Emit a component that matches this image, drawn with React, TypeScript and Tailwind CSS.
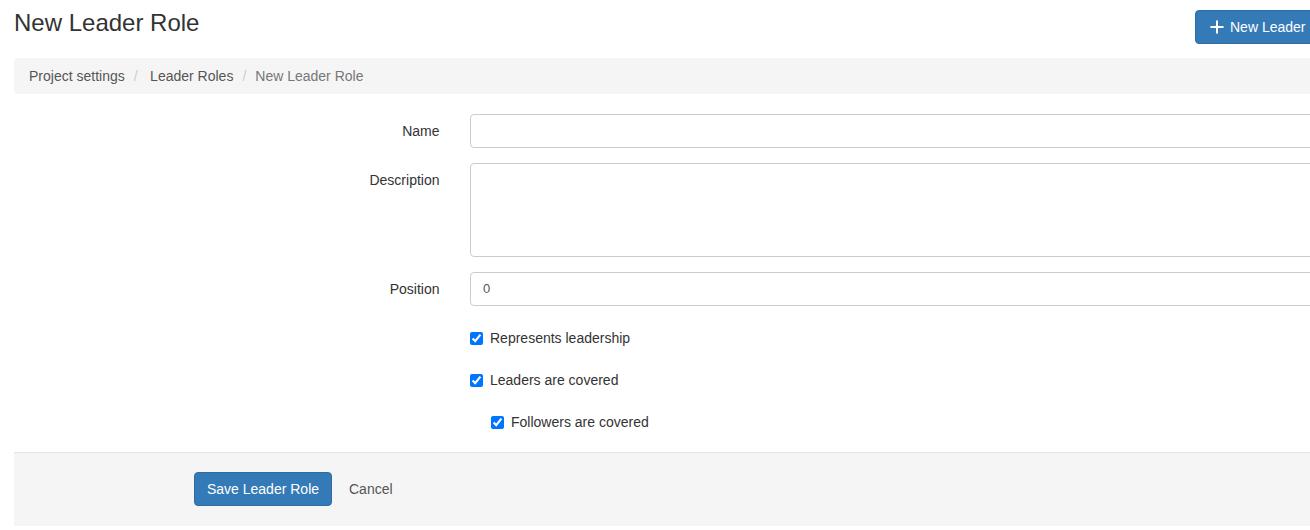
import React from "react";
import { Plus } from "lucide-react";

function Row({ label, className = "", children }: { label: string; className?: string; children: React.ReactNode }) {
  return (
    <div className={`flex ${className}`}>
      <label className="w-[425.5px] shrink-0 pt-[7px] text-right text-[14px] leading-[20px] text-[#333333]">{label}</label>
      <div className="ml-[30.5px] flex-1">{children}</div>
    </div>
  );
}

function Check({ label, className = "" }: { label: string; className?: string }) {
  return (
    <label className={`flex h-[20px] items-center text-[14px] leading-[20px] text-[#333333] ${className}`}>
      <input type="checkbox" defaultChecked className="m-0 h-[13px] w-[13px]" />
      <span className="ml-[7px]">{label}</span>
    </label>
  );
}

export default function App() {
  return (
    <div className="h-[530px] w-[1310px] overflow-hidden bg-white font-['Liberation_Sans',Arial,sans-serif]">
      <div className="w-[1400px] pl-[14px]">
        <div className="flex h-[58px] items-start justify-between">
          <h1 className="mt-[10px] text-[24px] font-normal leading-[26px] text-[#333333]">New Leader Role</h1>
          <button className="mt-[10px] flex h-[34px] w-[205px] items-center rounded-[4px] border border-[#2e6da4] bg-[#337ab7] pl-[11px] text-[14px] leading-[20px] text-white">
            <Plus size={20} strokeWidth={2.4} className="mr-[3px]" />
            <span>New Leader</span>
          </button>
        </div>

        <nav className="flex h-[36px] items-center rounded-[4px] bg-[#f5f5f5] pl-[15px] text-[14px] leading-[20px]">
          <a className="text-[#555555]">Project settings</a>
          <span className="ml-[9px] text-[#cccccc]">/</span>
          <a className="ml-[12.5px] text-[#555555]">Leader Roles</a>
          <span className="ml-[9px] text-[#cccccc]">/</span>
          <span className="ml-[9px] text-[#777777]">New Leader Role</span>
        </nav>

        <form className="mt-[20px]">
          <Row label="Name">
            <input type="text" className="block h-[34px] w-full rounded-[4px] border border-[#cccccc] bg-white px-3 text-[13px] text-[#555555] outline-none" />
          </Row>
          <Row label="Description" className="mt-[15px]">
            <textarea className="block h-[94px] w-full resize-none rounded-[4px] border border-[#cccccc] bg-white px-3 text-[13px] text-[#555555] outline-none" />
          </Row>
          <Row label="Position" className="mt-[15px]">
            <input type="text" defaultValue="0" className="block h-[34px] w-full rounded-[4px] border border-[#cccccc] bg-white px-3 pb-[2px] text-[13px] text-[#555555] outline-none" />
          </Row>
          <div className="ml-[456px] mt-[22px] flex flex-col gap-[22px]">
            <Check label="Represents leadership" />
            <Check label="Leaders are covered" />
            <Check label="Followers are covered" className="ml-[21px]" />
          </div>

          <div className="mt-[20px] flex h-[74px] items-start border-t border-[#e5e5e5] bg-[#f5f5f5] pl-[180px] pt-[19px]">
            <button type="button" className="h-[34px] w-[138px] rounded-[4px] border border-[#2e6da4] bg-[#337ab7] text-[14px] leading-[20px] text-white">Save Leader Role</button>
            <a className="ml-[17px] mt-[7px] text-[14px] leading-[20px] text-[#555555]">Cancel</a>
          </div>
        </form>
      </div>
    </div>
  );
}
